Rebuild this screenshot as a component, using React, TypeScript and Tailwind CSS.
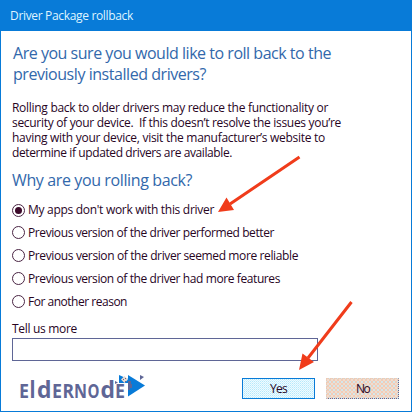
import { useLayoutEffect, useRef } from "react";

type LineProps = { text: string; width: number; className?: string };

// One line of dialog text, tracked so that it fills its measured width.
function Line({ text, width, className = "" }: LineProps) {
  const ref = useRef<HTMLSpanElement>(null);
  useLayoutEffect(() => {
    const el = ref.current;
    if (!el) return;
    el.style.letterSpacing = "0px";
    const natural = el.getBoundingClientRect().width;
    el.style.letterSpacing = `${(width - natural) / text.length}px`;
  }, [text, width]);
  return (
    <span ref={ref} className={`block w-max whitespace-pre ${className}`}>
      {text}
    </span>
  );
}

const reasons = [
  { text: "My apps don't work with this driver", width: 186 },
  { text: "Previous version of the driver performed better", width: 246 },
  { text: "Previous version of the driver seemed more reliable", width: 270 },
  { text: "Previous version of the driver had more features", width: 252 },
  { text: "For another reason", width: 99 },
];

const body = [
  { text: "Rolling back to older drivers may reduce the functionality or", width: 316 },
  { text: "security of your device.  If this doesn’t resolve the issues you’re", width: 329 },
  { text: "having with your device, visit the manufacturer’s website to", width: 313 },
  { text: "determine if updated drivers are available.", width: 220 },
];

// Wordmark letters: small capitals mixed with tall l and d.
const letters = [
  { c: "E", x: -1, w: 10, size: 19 },
  { c: "l", x: 9.5, w: 6, size: 24 },
  { c: "d", x: 17, w: 14.5, size: 24 },
  { c: "E", x: 32, w: 10, size: 19 },
  { c: "R", x: 42.5, w: 11.5, size: 19 },
  { c: "N", x: 54, w: 13, size: 19 },
  { c: "O", x: 67.5, w: 12, size: 19 },
  { c: "d", x: 80.5, w: 14.5, size: 24 },
  { c: "E", x: 95, w: 10, size: 19 },
];

function Logo() {
  return (
    <svg className="ml-[19px] mt-[12px] block h-[28px] w-[130px] overflow-visible" viewBox="0 0 130 28">
      <g fill="#5f6696" fontFamily="'Open Sans', 'Noto Sans', sans-serif" fontWeight="700">
        {letters.map((l) => (
          <text key={l.x} x={l.x} y="24.5" fontSize={l.size} textLength={l.w} lengthAdjust="spacingAndGlyphs">
            {l.c}
          </text>
        ))}
      </g>
      <path d="M108 2L125 12.5L108 23.500Z" fill="#087bd8" />
      <path d="M99 2L108 6V10L99 10Z" fill="#087bd8" />
      <path d="M101 6.5l3.500-3.500 3.500 3.500-3.500 3.500z" fill="#eadbd0" />
      <path d="M103 6h1v1h-1zM105 5h1v1h-1zM105 8h1v1h-1z" fill="#5f6696" />
      <path d="M95 8l3 1.500-3 1.500zM120 2l4 2-4 3zM108 8h3v3h1v4h-2v2h-2z" fill="#5f6696" />
    </svg>
  );
}

export default function App() {
  return (
    <main className="relative h-[412px] w-[412px] overflow-hidden bg-white font-['Open_Sans','Noto_Sans',sans-serif]">
      <div className="flex h-[412px] flex-col border-x border-b border-[#087bd8]">
        <header className="h-[31px] shrink-0 bg-[#087bd8] pl-[9px] pt-[8px] text-[12px] leading-[16px] text-[#dff4ff]">
          <Line text="Driver Package rollback" width={123} />
        </header>
        <section className="flex flex-col pl-[11px] pt-[12px]">
          <h1 className="pl-px text-[16px] leading-[21px] text-[#3268ab]">
            <Line text="Are you sure you would like to roll back to the" width={318} />
            <Line text="previously installed drivers?" width={193} />
          </h1>
          <div className="mt-[15px] text-[12px] leading-[15px] text-[#28051f]">
            {body.map((l) => <Line key={l.text} {...l} />)}
          </div>
          <h2 className="mt-[10px] text-[16px] leading-[21px] text-[#3268ab]">
            <Line text="Why are you rolling back?" width={180} />
          </h2>
          <div className="mt-[8px] text-[12px] text-[#28051f]">
            {reasons.map((r, i) => (
              <label key={r.text} className="flex h-[23px] items-center gap-[3px] first:h-[22px]">
                <span className="flex size-[13px] items-center justify-center rounded-full border border-[#4a2544]">
                  {i === 0 && <span className="size-[7px] rounded-full bg-[#3c0a2a]" />}
                </span>
                <Line {...r} />
              </label>
            ))}
          </div>
          <div className="mt-[8px] text-[12px] leading-[16px] text-[#28051f]">
            <Line text="Tell us more" width={65} />
          </div>
          <div className="mt-px h-[23px] w-[306px] border border-[#5f6696]" />
        </section>
        <footer className="flex items-start">
          <Logo />
          <div className="ml-[92px] mt-[17px] flex gap-[11px] text-[12px] text-[#28051f]">
            <button className="flex h-[21px] w-[73px] items-center justify-center border border-[#087bd8] bg-[conic-gradient(#b4eafc_0_25%,#f0faff_0_50%,#cff1fd_0_75%,#f0faff_0)] bg-[length:2px_2px]">
              <Line text="Yes" width={17} />
            </button>
            <button className="flex h-[21px] w-[73px] items-center justify-center border border-dotted border-b-[#5f6696] border-l-[#e8cbb9] border-r-[#5f6696] border-t-[#e8cbb9] bg-[conic-gradient(#f0cdb8_0_25%,#d5e6ea_0_50%,#f0cdb8_0_75%,#f0ddd0_0)] bg-[length:4px_4px]">
              <Line text="No" width={13} />
            </button>
          </div>
        </footer>
      </div>
      <svg className="pointer-events-none absolute inset-0 size-[412px]" viewBox="0 0 412 412">
        <path d="M299.500 157L230 204M351.500 302L308 358" stroke="#f03c1b" strokeWidth="3" />
        <path d="M218 212L226.500 197.500L234 210ZM299 370L302.500 353.500L314 362Z" fill="#f03c1b" />
      </svg>
    </main>
  );
}
